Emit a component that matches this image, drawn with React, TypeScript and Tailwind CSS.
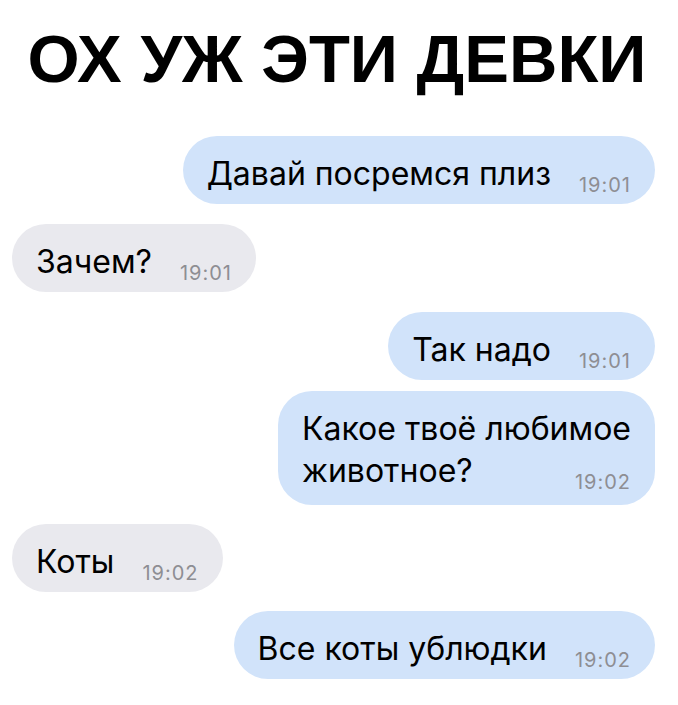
type Msg = {
  lines: string[];
  time: string;
  mine: boolean;
  gapTop: string;
};

const messages: Msg[] = [
  { lines: ['Давай посремся плиз'], time: '19:01', mine: true, gapTop: 'mt-0' },
  { lines: ['Зачем?'], time: '19:01', mine: false, gapTop: 'mt-[20px]' },
  { lines: ['Так надо'], time: '19:01', mine: true, gapTop: 'mt-[20px]' },
  { lines: ['Какое твоё любимое', 'животное?'], time: '19:02', mine: true, gapTop: 'mt-[11px]' },
  { lines: ['Коты'], time: '19:02', mine: false, gapTop: 'mt-[19px]' },
  { lines: ['Все коты ублюдки'], time: '19:02', mine: true, gapTop: 'mt-[19px]' },
];

function Bubble({ msg }: { msg: Msg }) {
  const first = msg.lines.slice(0, -1);
  const last = msg.lines[msg.lines.length - 1];
  const multi = first.length > 0;
  return (
    <div className={`flex ${msg.mine ? 'justify-end' : 'justify-start'} ${msg.gapTop}`}>
      <div
        className={`rounded-[34px] px-[24px] pt-[20px] whitespace-nowrap text-[32px] leading-[36px] text-black ${
          multi ? 'pb-[16px]' : 'pb-[12px]'
        } ${msg.mine ? 'bg-[#d1e3fa]' : 'bg-[#e9e9ee]'}`}
      >
        {first.map((line) => (
          <div key={line} className="mb-[6px]">
            {line}
          </div>
        ))}
        <div className="flex items-end justify-between gap-[28px]">
          <span>{last}</span>
          <span className="text-[20px] leading-[14px] tracking-[1px] text-[#8e8e93]">{msg.time}</span>
        </div>
      </div>
    </div>
  );
}

export default function App() {
  return (
    <div className="w-[678px] h-[705px] bg-white overflow-hidden font-['Inter','Liberation_Sans',sans-serif]">
      <h1 className="pt-[25px] pr-[4px] text-center font-['Liberation_Sans',Arial,sans-serif] text-[67px] leading-none font-bold text-black">
        ОХ УЖ ЭТИ ДЕВКИ
      </h1>
      <div className="mt-[44px] pl-[12px] pr-[23px]">
        {messages.map((m, i) => (
          <Bubble key={i} msg={m} />
        ))}
      </div>
    </div>
  );
}
